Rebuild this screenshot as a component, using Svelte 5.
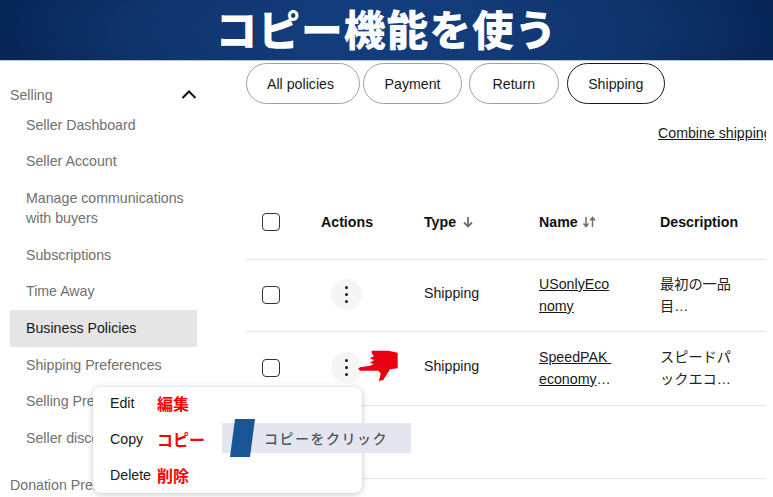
<script lang="ts">
  const sideItems = [
    "Seller Dashboard",
    "Seller Account",
    "Manage communications with buyers",
    "Subscriptions",
    "Time Away",
    "Business Policies",
    "Shipping Preferences",
    "Selling Preferences",
    "Seller discounts"
  ];
  const pills = ["All policies", "Payment", "Return", "Shipping"];
  const rows = [
    { name: ["USonlyEco", "nomy"], desc: ["最初の一品", "目…"] },
    { name: ["SpeedPAK ", "economy"], desc: ["スピードパ", "ックエコ…"], more: true }
  ];
</script>

<div class="page">
  <header class="banner"><h1>コピー機能を使う</h1></header>

  <div class="body">
    <nav class="side">
      <div class="group">
        <span>Selling</span>
        <svg width="16" height="10" viewBox="0 0 16 10"><path d="M1.500 9l6.500-6.500L14.500 9" fill="none" stroke="#111" stroke-width="2"/></svg>
      </div>
      <ul>
        {#each sideItems as item}
          <li class:active={item === "Business Policies"}>{item}</li>
        {/each}
      </ul>
      <div class="group donation"><span>Donation Preferences</span></div>
    </nav>

    <main class="content">
      <div class="pills">
        {#each pills as p}
          <button type="button" class:on={p === "Shipping"}>{p}</button>
        {/each}
      </div>
      <div class="combine"><span>Combine shipping discounts</span></div>

      <div class="row head">
        <span class="box"></span>
        <span>Actions</span>
        <span class="sort">Type
          <svg width="12" height="12" viewBox="0 0 12 12"><path d="M6 1v9M2 6.500L6 10.500l4-4" fill="none" stroke="#707070" stroke-width="1.800"/></svg>
        </span>
        <span class="sort tight">Name
          <svg width="15" height="12" viewBox="0 0 15 12"><path d="M4 1v9M1.500 7.500L4 10.500l2.500-3M10.500 11V2M8 4.500L10.500 1.500l2.500 3" fill="none" stroke="#707070" stroke-width="1.500"/></svg>
        </span>
        <span>Description</span>
      </div>

      {#each rows as r}
        <div class="row item">
          <span class="box"></span>
          <span class="dots"><i></i><i></i><i></i></span>
          <span class="kind">Shipping</span>
          <span class="name"><u>{r.name[0]}</u><br /><u>{r.name[1]}</u>{#if r.more}…{/if}</span>
          <span class="desc">{r.desc[0]}<br />{r.desc[1]}</span>
        </div>
      {/each}
      <div class="row empty"></div>
    </main>
  </div>

  <svg class="hand" width="42" height="32" viewBox="0 0 42 32">
    <path d="M13.700 .7H30.300L39.700 2.700V18.300L32 19.300 25.300 30 21 31 22.700 23.300 20.300 20.700H2L0 18.700 2 17.300 12 15.700 16 14 11.700 13 16 10 12 8.300 16 6 13.700 3.300z" fill="#e60012"/>
  </svg>

  <div class="menu">
    <div class="opt"><span>Edit</span><b>編集</b></div>
    <div class="opt"><span>Copy</span><b>コピー</b></div>
    <div class="opt"><span>Delete</span><b>削除</b></div>
  </div>

  <div class="callout">
    <svg class="flag" width="28" height="40" viewBox="0 0 28 40"><path d="M6 0h20l-5 38H1z" fill="#1a5596"/></svg>
    <span>コピーをクリック</span>
  </div>
</div>

<style>
  :global(body) {
    margin: 0;
    background: #fff;
  }
  .page {
    position: relative;
    width: 773px;
    height: 497px;
    overflow: hidden;
    font-family: "Liberation Sans", "Noto Sans CJK JP", sans-serif;
    font-size: 14.2px;
    color: #191919;
  }
  .banner {
    height: 60px;
    border-bottom: 1px solid #b9c4d4;
    background: radial-gradient(ellipse 60% 220% at 50% 50%, #143f82 0%, #10366f 50%, #041d4c 100%);
    display: flex;
    justify-content: center;
    align-items: center;
  }
  h1 {
    margin: 0;
    padding-bottom: 4px;
    font-family: "Noto Sans CJK JP", sans-serif;
    font-size: 41.750px;
    font-weight: 900;
    line-height: 54px;
    letter-spacing: 1px;
    color: #fff;
  }
  .body {
    display: flex;
  }
  .side {
    width: 187px;
    margin-left: 10px;
    margin-right: 49px;
    flex: none;
    color: #707070;
  }
  .group {
    display: flex;
    justify-content: space-between;
    align-items: center;
    height: 20px;
    margin-top: 24px;
  }
  .group svg {
    margin-top: -2px;
  }
  .donation {
    margin-top: 19px;
    white-space: nowrap;
  }
  ul {
    list-style: none;
    margin: 1.500px 0 0;
    padding: 0;
  }
  li {
    padding: 8px 8px 8px 16px;
    line-height: 20.6px;
  }
  li.active {
    background: #e5e5e5;
    color: #191919;
  }
  .content {
    width: 520px;
    overflow: hidden;
  }
  .pills {
    display: flex;
    margin-top: 2px;
  }
  .pills button {
    appearance: none;
    height: 41px;
    padding: 0 20.500px;
    margin-right: 7px;
    border: 1px solid #a0a0a0;
    border-radius: 21px;
    background: #fff;
    color: #191919;
    font: inherit;
  }
  .pills button:nth-child(1) {
    padding: 0 25px 0 20px;
    margin-right: 3px;
  }
  .pills button:nth-child(3) {
    padding: 0 22.500px;
    margin-right: 8px;
  }
  .pills button.on {
    border-color: #191919;
  }
  .combine {
    margin-top: 19px;
    padding-left: 412px;
    line-height: 20px;
    white-space: nowrap;
    text-decoration: underline;
  }
  .row {
    display: grid;
    grid-template-columns: 59px 103px 115px 121px 1fr;
    padding-left: 16px;
    align-items: center;
    border-bottom: 1px solid #e5e5e5;
  }
  .head {
    height: 75px;
    margin-top: 41px;
    font-weight: 700;
    color: #111;
  }
  .item {
    height: 72px;
    padding-bottom: 2px;
    box-sizing: border-box;
    line-height: 21.500px;
  }
  .item + .item {
    height: 74px;
  }
  .empty {
    height: 72px;
  }
  .box {
    width: 16px;
    height: 16px;
    border: 1.500px solid #333;
    border-radius: 4px;
  }
  .sort {
    display: flex;
    align-items: center;
    gap: 6px;
  }
  .sort.tight {
    gap: 4px;
  }
  .dots {
    width: 31px;
    height: 31px;
    margin-left: 10px;
    border-radius: 50%;
    background: #f5f5f5;
    display: flex;
    flex-direction: column;
    align-items: center;
    justify-content: center;
    gap: 3.500px;
  }
  .dots i {
    width: 3.500px;
    height: 3.500px;
    border-radius: 50%;
    background: #191919;
  }
  .kind {
    margin-bottom: 2px;
  }
  .name {
    white-space: pre;
    margin-top: 2px;
  }
  .desc {
    color: #222;
    margin-top: 2px;
  }
  .hand {
    position: absolute;
    left: 358px;
    top: 350px;
  }
  .menu {
    position: absolute;
    left: 93px;
    top: 387px;
    width: 269px;
    height: 106px;
    background: #fff;
    border-radius: 8px;
    box-shadow: 0 1px 6px rgba(0, 0, 0, 0.24);
    display: flex;
    flex-direction: column;
    gap: 4px;
  }
  .opt {
    display: grid;
    grid-template-columns: 47px auto;
    align-items: center;
    padding-left: 17px;
    height: 32px;
  }
  .opt b {
    font-size: 16px;
    font-weight: 700;
    color: #f00;
    font-family: "Noto Sans CJK JP", sans-serif;
  }
  .callout {
    position: absolute;
    left: 222px;
    top: 423px;
    width: 189px;
    height: 30px;
    background: #e3e6f1;
    display: flex;
    align-items: center;
    padding-left: 42px;
    box-sizing: border-box;
  }
  .callout span {
    font-family: "Noto Sans CJK JP", sans-serif;
    font-size: 14px;
    font-weight: 500;
    letter-spacing: 1.500px;
    color: #555;
  }
  .flag {
    position: absolute;
    left: 7px;
    top: -4px;
  }
</style>
